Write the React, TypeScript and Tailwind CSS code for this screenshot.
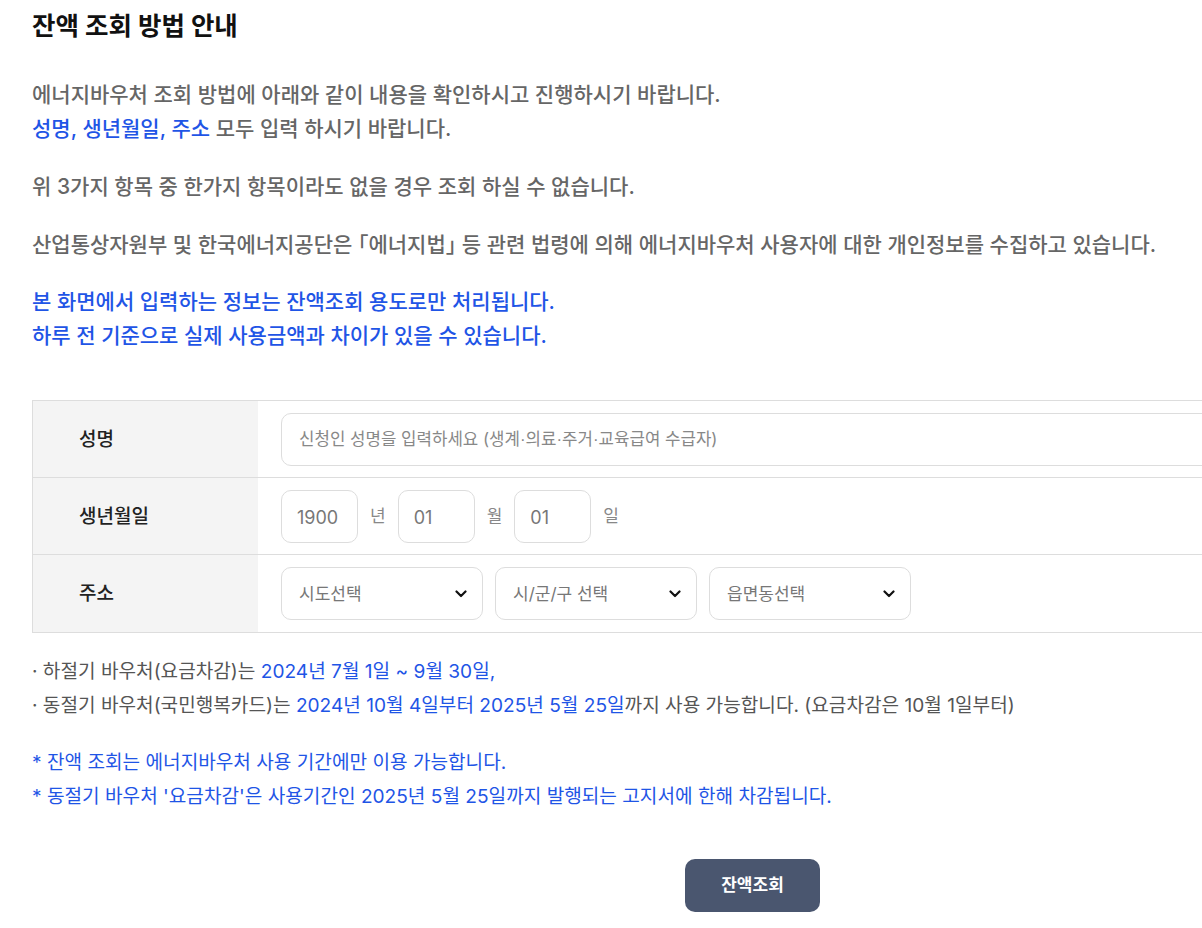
import React from "react";

const FONT = { fontFamily: 'Inter, "Noto Sans CJK KR", "Noto Sans", sans-serif' };

function Chevron() {
  return (
    <svg width="12" height="8" viewBox="0 0 12 8" fill="none">
      <path d="M1.5 1.5L6 6L10.5 1.5" stroke="#111" strokeWidth="2.2" strokeLinecap="round" strokeLinejoin="round" />
    </svg>
  );
}

function Select({ label }: { label: string }) {
  return (
    <div className="flex h-[53px] w-[202px] items-center justify-between rounded-[10px] border border-[#dddddd] bg-white pl-[17px] pr-[15px] text-[17px] text-[#777777]">
      <span className="pt-[3px]">{label}</span>
      <Chevron />
    </div>
  );
}

function DateBox({ value }: { value: string }) {
  return (
    <div className="flex h-[53px] w-[77px] items-center rounded-[10px] border border-[#dddddd] bg-white pl-[15px] pt-[2px] text-[18px] text-[#777777]">
      {value}
    </div>
  );
}

function Row({ label, children, last }: { label: string; children: React.ReactNode; last?: boolean }) {
  return (
    <div className={`flex h-[77px] ${last ? "" : "border-b border-[#dddddd]"}`}>
      <div className="flex w-[225px] shrink-0 items-center bg-[#f4f4f4] pl-[46px] pt-[2px] text-[19px] font-medium text-[#222222]">
        {label}
      </div>
      <div className="flex flex-1 items-center pl-[23px]">{children}</div>
    </div>
  );
}

const Dot = () => <span className="font-['Liberation_Sans']">·</span>;

export default function App() {
  const blue = "text-[#1f55e6]";
  return (
    <div className="w-full overflow-hidden bg-white" style={FONT}>
      <div className="w-[1473px] pl-[32px] pt-[6px] pb-[16px]">
        <h1 className="text-[25.5px] font-bold leading-[40px] text-[#111111]">잔액 조회 방법 안내</h1>

        <div className="mt-[32px] text-[21px] font-medium leading-[34px] text-[#666666]">
          <p>에너지바우처 조회 방법에 아래와 같이 내용을 확인하시고 진행하시기 바랍니다.</p>
          <p>
            <span className={blue}>성명, 생년월일, 주소</span> 모두 입력 하시기 바랍니다.
          </p>
          <p className="mt-[24px]">위 3가지 항목 중 한가지 항목이라도 없을 경우 조회 하실 수 없습니다.</p>
          <p className="mt-[24px]">
            산업통상자원부 및 한국에너지공단은 <span className="[font-feature-settings:'halt']">「에너지법」</span> 등 관련 법령에 의해 에너지바우처 사용자에 대한 개인정보를 수집하고 있습니다.
          </p>
          <div className={`mt-[23px] ${blue}`}>
            <p>본 화면에서 입력하는 정보는 잔액조회 용도로만 처리됩니다.</p>
            <p>하루 전 기준으로 실제 사용금액과 차이가 있을 수 있습니다.</p>
          </div>
        </div>

        <div className="mt-[47px] w-[1441px] border border-[#dddddd]">
          <Row label="성명">
            <div className="flex h-[53px] flex-1 items-center rounded-[10px] border border-[#dddddd] pl-[17px] pt-[2px] text-[16.8px] text-[#888888]">
              <span>
                신청인 성명을 입력하세요 (생계<Dot />의료<Dot />주거<Dot />교육급여 수급자)
              </span>
            </div>
            <div className="w-[24px]" />
          </Row>
          <Row label="생년월일">
            <div className="flex items-center text-[17px] text-[#888888]">
              <DateBox value="1900" />
              <span className="mx-[12px] pt-[2px]">년</span>
              <DateBox value="01" />
              <span className="mx-[12px] pt-[2px]">월</span>
              <DateBox value="01" />
              <span className="mx-[12px] pt-[2px]">일</span>
            </div>
          </Row>
          <Row label="주소" last>
            <div className="flex items-center gap-[12px]">
              <Select label="시도선택" />
              <Select label="시/군/구 선택" />
              <Select label="읍면동선택" />
            </div>
          </Row>
        </div>

        <div className="mt-[21px] text-[19.1px] leading-[34px] text-[#555555]">
          <p>
            · 하절기 바우처(요금차감)는 <span className={blue}>2024년 7월 1일 ~ 9월 30일,</span>
          </p>
          <p>
            · 동절기 바우처(국민행복카드)는 <span className={blue}>2024년 10월 4일부터 2025년 5월 25일</span>까지 사용 가능합니다. (요금차감은 10월 1일부터)
          </p>
          <div className={`mt-[23px] ${blue}`}>
            <p>* 잔액 조회는 에너지바우처 사용 기간에만 이용 가능합니다.</p>
            <p>* 동절기 바우처 '요금차감'은 사용기간인 2025년 5월 25일까지 발행되는 고지서에 한해 차감됩니다.</p>
          </div>
        </div>

        <div className="mt-[46px] flex justify-center">
          <button className="h-[53px] w-[135px] rounded-[10px] bg-[#4a566f] text-[17px] font-semibold text-white">
            잔액조회
          </button>
        </div>
      </div>
    </div>
  );
}
